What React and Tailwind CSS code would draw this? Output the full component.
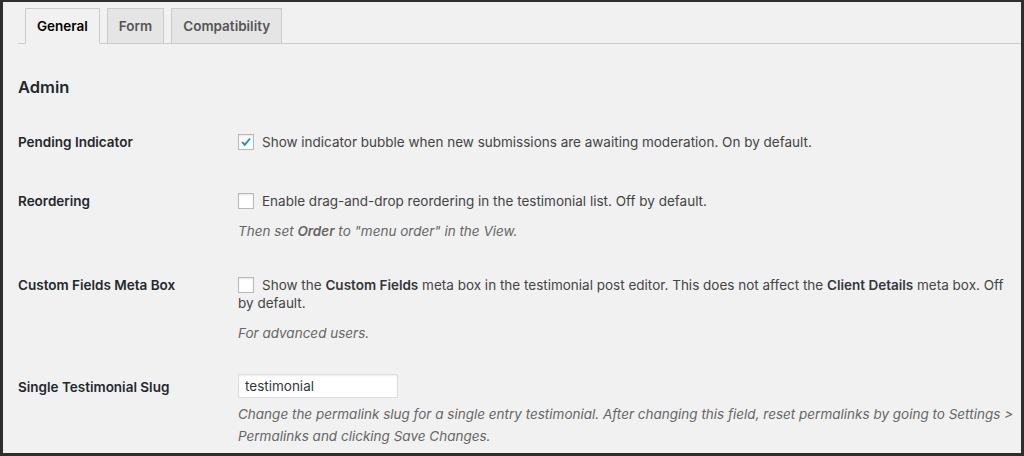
import React, { useState } from 'react';

const font = { fontFamily: 'Inter, "Liberation Sans", Arial, sans-serif' };

const Checkbox = ({ checked, onChange }) => (
  <button
    type="button"
    onClick={onChange}
    className="float-left w-4 h-4 bg-white border border-[#b4b9be] shadow-[inset_0_1px_2px_rgba(0,0,0,0.1)] flex items-center justify-center mr-2 mt-px"
  >
    {checked && (
      <svg viewBox="0 0 16 16" className="w-4 h-4">
        <path d="M3.5 8.2 L6.6 11.2 L12.6 4" fill="none" stroke="#1e8cbe" strokeWidth="2.2" />
      </svg>
    )}
  </button>
);

const Label = ({ children, className = '' }) => (
  <div className={`w-[220px] shrink-0 text-[13.5px] leading-[18px] font-semibold text-[#23282d] ${className}`}>{children}</div>
);

const App = () => {
  const [tab, setTab] = useState('General');
  const [pending, setPending] = useState(true);
  const [reorder, setReorder] = useState(false);
  const [custom, setCustom] = useState(false);
  const [slug, setSlug] = useState('testimonial');

  const tabs = ['General', 'Form', 'Compatibility'];

  return (
    <div style={font} className="w-[1024px] h-[456px] overflow-hidden bg-[#f1f1f1] border-t-2 border-l-[3px] border-r-[3px] border-b-[3px] border-[#2e2e2e] pl-[15px] pr-0">
      <div className="mt-[6px] flex gap-[7px] pl-[7px] border-b border-[#ccc]">
        {tabs.map((t) => (
          <button
            key={t}
            onClick={() => setTab(t)}
            className={`h-[36px] -mb-px px-[11px] border border-[#ccc] text-[13.5px] font-semibold ${
              tab === t ? 'bg-[#f1f1f1] border-b-[#f1f1f1] text-black' : 'bg-[#e5e5e5] text-[#555]'
            }`}
          >
            {t}
          </button>
        ))}
      </div>

      <h2 className="mt-[32px] text-[16.5px] leading-[22px] font-semibold text-[#23282d]">Admin</h2>

      <div className="mt-[35px] flex">
        <Label>Pending Indicator</Label>
        <div className="flex-1 text-[13.5px] leading-[18px] text-[#444]">
          <Checkbox checked={pending} onChange={() => setPending(!pending)} />
          <p>Show indicator bubble when new submissions are awaiting moderation. On by default.</p>
        </div>
      </div>

      <div className="mt-[41px] flex">
        <Label>Reordering</Label>
        <div className="flex-1 text-[13.5px] leading-[18px] text-[#444]">
          <Checkbox checked={reorder} onChange={() => setReorder(!reorder)} />
          <p>Enable drag-and-drop reordering in the testimonial list. Off by default.</p>
          <p className="mt-[12px] italic text-[#666]">
            Then set <b className="font-semibold">Order</b> to "menu order" in the View.
          </p>
        </div>
      </div>

      <div className="mt-[36px] flex">
        <Label>Custom Fields Meta Box</Label>
        <div className="flex-1 text-[13.5px] leading-[18px] text-[#444]">
          <Checkbox checked={custom} onChange={() => setCustom(!custom)} />
          <p>
            Show the <b className="font-semibold text-[#32373c]">Custom Fields</b> meta box in the testimonial post editor. This does not affect the{' '}
            <b className="font-semibold text-[#32373c]">Client Details</b> meta box. Off by default.
          </p>
          <p className="mt-[12px] italic text-[#666]">For advanced users.</p>
        </div>
      </div>

      <div className="mt-[32px] flex">
        <Label className="pt-[4px]">Single Testimonial Slug</Label>
        <div className="flex-1 text-[13.5px] text-[#444]">
          <input
            value={slug}
            onChange={(e) => setSlug(e.target.value)}
            className="w-[160px] h-[24px] px-[6px] bg-white border border-[#ddd] shadow-[inset_0_1px_2px_rgba(0,0,0,0.07)] text-[13.5px] text-[#32373c] outline-none"
          />
          <p className="mt-[5px] leading-[22px] italic text-[#666]">
            Change the permalink slug for a single entry testimonial. After changing this field, reset permalinks by going to Settings &gt; Permalinks and clicking Save Changes.
          </p>
        </div>
      </div>
    </div>
  );
};

export default App;
